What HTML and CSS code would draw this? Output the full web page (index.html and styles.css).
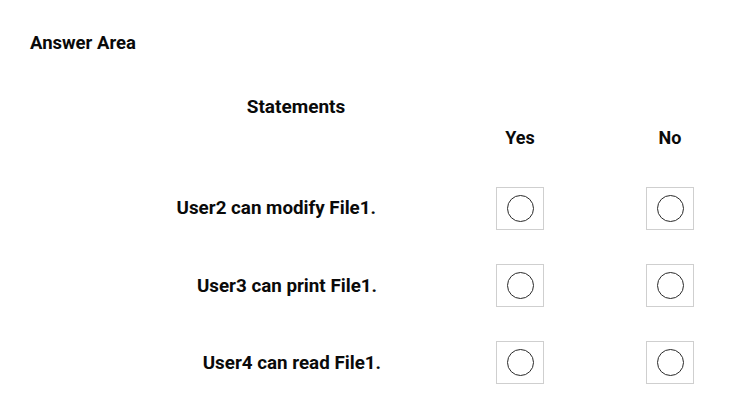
FILE: index.html
```html
<!DOCTYPE html>
<html>
<head>
<meta charset="utf-8">
<link rel="stylesheet" href="styles.css">
</head>
<body>
<div class="page">
  <h1 class="title">Answer Area</h1>
  <div class="statements-head">Statements</div>
  <div class="grid">
    <div class="col-head"></div>
    <div class="col-head">Yes</div>
    <div class="col-head">No</div>

    <div class="stmt s1">User2 can modify File1.</div>
    <div class="cell"><span class="box"><span class="radio"></span></span></div>
    <div class="cell"><span class="box"><span class="radio"></span></span></div>

    <div class="stmt s2">User3 can print File1.</div>
    <div class="cell"><span class="box"><span class="radio"></span></span></div>
    <div class="cell"><span class="box"><span class="radio"></span></span></div>

    <div class="stmt s3">User4 can read File1.</div>
    <div class="cell"><span class="box"><span class="radio"></span></span></div>
    <div class="cell"><span class="box"><span class="radio"></span></span></div>
  </div>
</div>
</body>
</html>
```

FILE: styles.css
```css
html, body {
  margin: 0;
  padding: 0;
  background: #fff;
}
body {
  font-family: Roboto, "Liberation Sans", Arial, sans-serif;
  font-weight: 700;
  color: #0a0a0a;
  width: 744px;
  height: 420px;
  overflow: hidden;
}
.page {
  padding: 32px 0 0 30px;
}
.title {
  margin: 0;
  font-size: 18.5px;
  line-height: 22px;
  font-weight: 700;
}
.statements-head {
  margin-top: 42px;
  width: 532px;
  text-align: center;
  font-size: 19px;
  line-height: 22px;
}
.grid {
  display: grid;
  grid-template-columns: 390px 100px 100px;
  grid-template-rows: 45px 77px 77px 77px;
  column-gap: 50px;
  margin-top: 7px;
}
.col-head {
  text-align: center;
  font-size: 18px;
  line-height: 22px;
  padding-top: 2px;
}
.stmt {
  font-size: 18.8px;
  line-height: 22px;
  text-align: right;
  align-self: center;
  padding-right: 44px;
}
.s1 { padding-bottom: 2px; }
.s2 { padding-right: 43px; }
.s3 { padding-right: 39px; }
.cell {
  display: flex;
  justify-content: center;
  align-items: center;
}
.box {
  width: 46px;
  height: 41px;
  border: 1px solid #cfcfcf;
  display: flex;
  align-items: center;
  justify-content: center;
}
.radio {
  width: 25px;
  height: 25px;
  border: 1.5px solid #2a2a2a;
  border-radius: 50%;
}
```
